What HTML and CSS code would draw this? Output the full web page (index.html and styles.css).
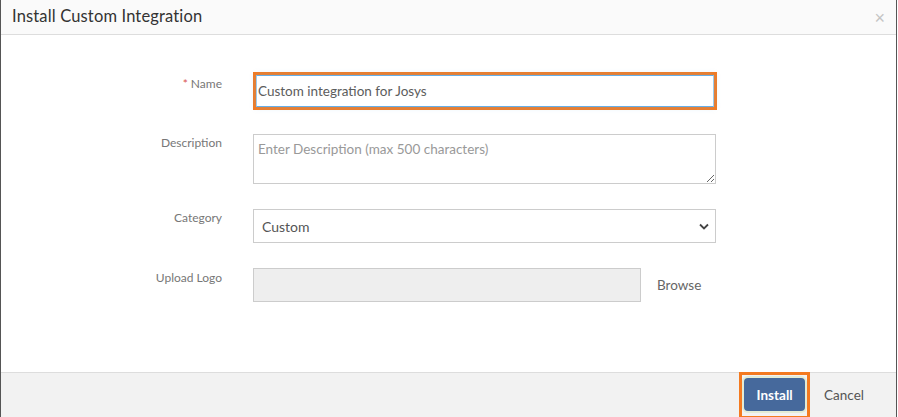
FILE: index.html
```html
<!DOCTYPE html>
<html lang="en">
<head>
    <meta charset="UTF-8">
    <meta name="viewport" content="width=device-width, initial-scale=1.0">
    <title>Install Custom Integration</title>
    <link rel="stylesheet" href="styles.css">
</head>
<body>
    <div class="modal">
        <div class="modal-header">
            <h4 class="modal-title">Install Custom Integration</h4>
            <button class="close" type="button">&times;</button>
        </div>
        <div class="modal-body">
            <form class="form">
                <div class="form-row name-row">
                    <label for="name"><span class="required">*</span> Name</label>
                    <div class="highlight">
                        <input type="text" id="name" class="name-input" value="Custom integration for Josys">
                    </div>
                </div>
                <div class="form-row">
                    <label for="description">Description</label>
                    <textarea id="description" class="field" placeholder="Enter Description (max 500 characters)"></textarea>
                </div>
                <div class="form-row">
                    <label for="category">Category</label>
                    <div class="select-wrap field">
                        <span>Custom</span>
                        <svg class="chevron" width="10" height="7" viewBox="0 0 10 7">
                            <path d="M1 1.5 L5 5.5 L9 1.5" fill="none" stroke="#444" stroke-width="1.8"/>
                        </svg>
                    </div>
                </div>
                <div class="form-row upload-row">
                    <label>Upload Logo</label>
                    <div class="upload-box"></div>
                    <span class="browse">Browse</span>
                </div>
            </form>
        </div>
        <div class="modal-footer">
            <div class="highlight btn-highlight">
                <button type="button" class="btn-install">Install</button>
            </div>
            <button type="button" class="btn-cancel">Cancel</button>
        </div>
    </div>
</body>
</html>
```
FILE: styles.css
```css
body {
    margin: 0;
    font-family: 'Lato', 'Liberation Sans', sans-serif;
    background-color: #fff;
    color: #555;
}
.modal {
    width: 895px;
    height: 417px;
    border-left: 1px solid #555;
    border-right: 1px solid #555;
    display: flex;
    flex-direction: column;
    background-color: #fff;
}
.modal-header {
    height: 34px;
    background-color: #fafafa;
    border-bottom: 1px solid #ddd;
    display: flex;
    align-items: center;
    justify-content: space-between;
    padding: 0 11px;
}
.modal-title {
    margin: 0 0 2px;
    font-size: 16.5px;
    font-weight: normal;
    color: #333;
    letter-spacing: 0.15px;
}
.close {
    border: none;
    background: none;
    font-size: 18px;
    color: #c4c4c4;
    padding: 0;
    margin-top: 2px;
    cursor: pointer;
}
.modal-body {
    flex: 1;
    padding-top: 37px;
}
.form-row {
    display: flex;
    align-items: flex-start;
    margin-bottom: 24px;
}
.form-row label {
    width: 221px;
    margin-right: 31px;
    text-align: right;
    font-size: 12px;
    color: #777;
    padding-top: 1px;
}
.name-row label {
    padding-top: 4px;
}
.upload-row label {
    padding-top: 2px;
}
.required {
    color: #d9534f;
}
.highlight {
    border: 3px solid #f47a20;
}
.name-input {
    display: block;
    width: 458px;
    height: 32px;
    box-sizing: border-box;
    border: 1px solid #66afe9;
    border-left-color: #9ccbee;
    border-right-color: #9ccbee;
    box-shadow: 0 0 6px rgba(102, 175, 233, 0.35);
    padding: 0 1px;
    font-family: inherit;
    font-size: 13.5px;
    color: #5c5c5c;
    outline: none;
}
.field {
    width: 463px;
    box-sizing: border-box;
    border: 1px solid #ccc;
    font-family: inherit;
    font-size: 13.5px;
    color: #555;
}
textarea.field {
    display: block;
    height: 50px;
    padding: 6px 4px;
    resize: vertical;
    margin: 0;
}
textarea.field::placeholder {
    color: #999;
}
.form-row:nth-child(2) {
    margin-bottom: 25px;
}
.select-wrap {
    height: 34px;
    display: flex;
    align-items: center;
    justify-content: space-between;
    padding: 0 6px 0 8px;
    font-size: 14px;
}
.upload-row {
    padding-top: 1px;
}
.upload-box {
    width: 388px;
    height: 34px;
    box-sizing: border-box;
    background-color: #eee;
    border: 1px solid #ccc;
}
.browse {
    margin-left: 16px;
    font-size: 13.5px;
    color: #666;
    padding-top: 9px;
}
.modal-footer {
    height: 44px;
    background-color: #f2f2f2;
    border-top: 1px solid #ddd;
    display: flex;
    align-items: flex-start;
    justify-content: flex-end;
    padding-right: 24px;
}
.btn-highlight {
    padding: 2px;
    margin-top: -1px;
}
.btn-install {
    display: block;
    width: 61px;
    height: 33px;
    background-color: #46699c;
    color: #fff;
    font-family: inherit;
    font-weight: bold;
    font-size: 13.5px;
    border: none;
    border-radius: 4px;
    box-shadow: 0 0 0 2px #e3ecd6;
    margin: 1px 0 3px;
    cursor: pointer;
}
.btn-cancel {
    background: none;
    border: none;
    font-family: inherit;
    font-size: 13.5px;
    color: #555;
    padding: 0 8px 0 14px;
    height: 44px;
    cursor: pointer;
}
```
